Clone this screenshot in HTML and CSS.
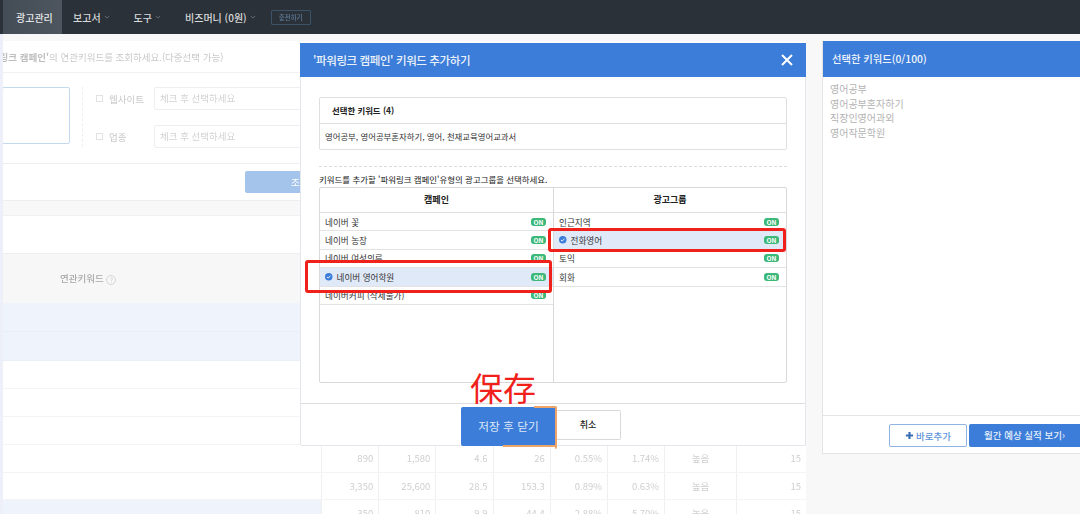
FILE: index.html
```html
<!DOCTYPE html>
<html lang="ko">
<head>
  <meta charset="UTF-8" />
  <title>광고관리</title>
  <link rel="stylesheet" href="styles.css">
</head>
<body>
  <nav class="topbar">
    <a class="nav-item active">광고관리</a>
    <a class="nav-item">보고서 <svg class="chev" viewBox="0 0 8 5"><path d="M1 1l3 3 3-3"/></svg></a>
    <a class="nav-item">도구 <svg class="chev" viewBox="0 0 8 5"><path d="M1 1l3 3 3-3"/></svg></a>
    <a class="nav-item">비즈머니 (0원) <svg class="chev" viewBox="0 0 8 5"><path d="M1 1l3 3 3-3"/></svg></a>
    <span class="charge">충전하기</span>
  </nav>

  <div class="page">
    <main class="main">
      <div class="guide"><span class="guide-text"><b>'파워링크 캠페인'</b>의 연관키워드를 조회하세요.(다중선택 가능)</span></div>
      <div class="filter">
        <div class="keyword-box"></div>
        <div class="filter-fields">
          <div class="field"><i class="check"></i><label>웹사이트</label><span class="select">체크 후 선택하세요</span></div>
          <div class="field"><i class="check"></i><label>업종</label><span class="select">체크 후 선택하세요</span></div>
        </div>
      </div>
      <div class="search-row"><span class="search-btn">조회</span></div>
      <div class="grey-strip"></div>
      <div class="blank-row"></div>
      <div class="thead">연관키워드 <span class="help">?</span></div>
      <div class="row blue tall"></div>
      <div class="row blue tall"></div>
      <div class="row"></div>
      <div class="row"></div>
      <div class="row"></div>
      <div class="row data">
        <span class="c1"></span><span class="c">890</span><span class="c">1,580</span><span class="c">4.6</span><span class="c">26</span><span class="c">0.55%</span><span class="c">1.74%</span><span class="c mid">높음</span><span class="c last">15</span>
      </div>
      <div class="row data">
        <span class="c1"></span><span class="c">3,350</span><span class="c">25,600</span><span class="c">28.5</span><span class="c">153.3</span><span class="c">0.89%</span><span class="c">0.63%</span><span class="c mid">높음</span><span class="c last">15</span>
      </div>
      <div class="row data selected">
        <span class="c1"></span><span class="c">350</span><span class="c">810</span><span class="c">9.9</span><span class="c">44.4</span><span class="c">2.88%</span><span class="c">5.70%</span><span class="c mid">높음</span><span class="c last">15</span>
      </div>
    </main>

    <aside class="side">
      <div class="side-head">선택한 키워드(0/100)</div>
      <ul class="side-list">
        <li>영어공부</li>
        <li>영어공부혼자하기</li>
        <li>직장인영어과외</li>
        <li>영어작문학원</li>
      </ul>
      <div class="side-foot">
        <span class="btn-add"><svg viewBox="0 0 10 10"><path d="M5 1v8M1 5h8"/></svg>바로추가</span>
        <span class="btn-month">월간 예상 실적 보기›</span>
      </div>
    </aside>
  </div>

  <section class="modal">
    <header class="modal-head">
      <span>'파워링크 캠페인' 키워드 추가하기</span>
      <svg class="close" viewBox="0 0 12 12"><path d="M1 1l10 10M11 1L1 11"/></svg>
    </header>
    <div class="modal-body">
      <div class="picked">
        <div class="picked-title">선택한 키워드 (4)</div>
        <div class="picked-list">영어공부, 영어공부혼자하기, 영어, 천재교육영어교과서</div>
      </div>
      <div class="dash"></div>
      <p class="hint">키워드를 추가할 '파워링크 캠페인'유형의 광고그룹을 선택하세요.</p>
      <div class="pick-table">
        <div class="col">
          <div class="col-head">캠페인</div>
          <div class="item"><span>네이버 꽃</span><em>ON</em></div>
          <div class="item"><span>네이버 농장</span><em>ON</em></div>
          <div class="item"><span>네이버 여성의류</span><em>ON</em></div>
          <div class="item on"><svg class="tick" viewBox="0 0 10 10"><circle cx="5" cy="5" r="5"/><path d="M2.6 5.2l1.7 1.6 3-3.2"/></svg><span>네이버 영어학원</span><em>ON</em></div>
          <div class="item"><span>네이버커피 (삭제불가)</span><em>ON</em></div>
        </div>
        <div class="col">
          <div class="col-head">광고그룹</div>
          <div class="item"><span>인근지역</span><em>ON</em></div>
          <div class="item on"><svg class="tick" viewBox="0 0 10 10"><circle cx="5" cy="5" r="5"/><path d="M2.6 5.2l1.7 1.6 3-3.2"/></svg><span>전화영어</span><em>ON</em></div>
          <div class="item"><span>토익</span><em>ON</em></div>
          <div class="item"><span>회화</span><em>ON</em></div>
        </div>
      </div>
    </div>
    <footer class="modal-foot">
      <span class="btn-save">저장 후 닫기</span>
      <span class="btn-cancel">취소</span>
    </footer>
  </section>

  <!-- red marks drawn over the screenshot -->
  <div class="mark mark-left"></div>
  <div class="mark mark-right"></div>
  <div class="mark-text">保存</div>
</body>
</html>
```

FILE: styles.css
```css
* {
  margin: 0;
  padding: 0;
  box-sizing: border-box;
}

body {
  width: 1080px;
  height: 514px;
  overflow: hidden;
  position: relative;
  font-family: "Noto Sans CJK KR", "Noto Sans", sans-serif;
  background: #f8f8f8;
  color: #333;
  filter: blur(0.4px);
}

/* Top bar */
.topbar {
  height: 34px;
  background: #2b3138;
  display: flex;
  align-items: center;
  padding-left: 3px;
  color: #d8dadc;
  font-size: 10px;
  font-weight: 500;
}

.nav-item {
  height: 34px;
  display: flex;
  align-items: center;
  gap: 3px;
  padding: 0 13px 0 11px;
  white-space: nowrap;
}

.nav-item.active {
  width: 59px;
  padding: 0 13px;
  background: linear-gradient(to right, #444c55, #4d555e);
  color: #e4e5e7;
}

.chev {
  width: 6px;
  height: 4px;
  fill: none;
  stroke: #7b828a;
  stroke-width: 1;
}

.charge {
  width: 40px;
  height: 15px;
  margin-left: 2px;
  border: 1px solid #3c5269;
  border-radius: 1px;
  color: #5f7c99;
  font-size: 6.5px;
  line-height: 13px;
  text-align: center;
}

/* Page behind the modal */
.page {
  display: flex;
  align-items: flex-start;
  height: 480px;
  padding-left: 3px;
  background: linear-gradient(to right, #eef0f9 3px, transparent 3px);
}

.main {
  width: 803px;
  height: 480px;
  margin-top: 7px;
  overflow: hidden;
  background: #fff;
  color: #c9c9c9;
}

.guide {
  height: 32px;
  border-bottom: 1px solid #f1f1f1;
  font-size: 9.5px;
  line-height: 33px;
  overflow: hidden;
  white-space: nowrap;
}

.guide-text { margin-left: -24px; }
.guide b { color: #bdbdbd; }

.filter {
  height: 91px;
  display: flex;
  border-bottom: 1px solid #eee;
}

.keyword-box {
  width: 68px;
  height: 57px;
  margin: 14px 0 0 -1px;
  border: 1px solid #c4d8ee;
  border-radius: 2px;
}

.filter-fields {
  height: 60px;
  margin: 14px 0 0 12px;
  padding-left: 13px;
  border-left: 1px dashed #eee;
}

.field {
  height: 23px;
  margin-bottom: 15px;
  display: flex;
  align-items: center;
  font-size: 9.5px;
}

.check {
  width: 7px;
  height: 7px;
  margin-right: 6px;
  border: 1px solid #e2e2e2;
}

.field label { width: 45px; }

.select {
  width: 160px;
  height: 23px;
  padding-left: 5px;
  border: 1px solid #eee;
  border-radius: 2px;
  line-height: 21px;
  color: #d2d2d2;
}

.search-row { height: 36px; padding: 7px 0 0 242px; }

.search-btn {
  display: block;
  width: 120px;
  height: 22px;
  padding-left: 46px;
  border-radius: 2px;
  background: #a5c4ec;
  color: #fff;
  font-size: 9.5px;
  line-height: 22px;
}

.grey-strip {
  height: 16px;
  background: #f8f8f8;
  border-top: 1px solid #eee;
  border-bottom: 1px solid #f1f1f1;
}

.blank-row { height: 37px; }

.thead {
  height: 50px;
  padding-left: 57px;
  background: #f7f7f7;
  border-top: 1px solid #eee;
  color: #a9a9a9;
  font-size: 9.5px;
  font-weight: 500;
  line-height: 49px;
}

.help {
  display: inline-block;
  width: 10px;
  height: 10px;
  border: 1px solid #d6d6d6;
  border-radius: 50%;
  color: #cfcfcf;
  font-size: 7px;
  font-weight: 400;
  line-height: 8px;
  text-align: center;
  vertical-align: -1px;
}

.row {
  height: 28px;
  display: flex;
  border-bottom: 1px solid #f4f4f4;
}

.row.tall { height: 29px; }
.row.blue { background: #eff4fc; border-bottom-color: #e9eff8; }

.row.data { height: 27.5px; }
.row.data.selected .c1 { background: #eff4fc; }

.c1 { width: 318px; }

.c {
  width: 57.2px;
  padding-right: 5px;
  border-left: 1px solid #f0f0f0;
  color: #cfcfcf;
  font-size: 9.5px;
  line-height: 27px;
  text-align: right;
}

.c.mid { width: 72px; padding: 0; text-align: center; }
.c.last { flex: 1; }

/* Right panel */
.side {
  width: 258px;
  height: 413px;
  margin: 7px 0 0 16px;
  display: flex;
  flex-direction: column;
  background: #fff;
  border-left: 1px solid #e4e4e4;
  border-bottom: 1px solid #e4e4e4;
}

.side-head {
  height: 36px;
  padding-left: 9px;
  background: #3b7dd8;
  color: #f2f6fc;
  font-size: 10.3px;
  font-weight: 500;
  line-height: 36px;
}

.side-list {
  flex: 1;
  padding: 5px 7px;
  list-style: none;
  color: #b3b3b3;
  font-size: 10px;
  line-height: 14.5px;
}

.side-foot {
  height: 38px;
  padding: 8px 0 0 66px;
  display: flex;
  gap: 2px;
  border-top: 1px solid #e4e4e4;
  font-size: 9.5px;
  font-weight: 500;
}

.btn-add {
  width: 78px;
  height: 23px;
  display: flex;
  align-items: center;
  justify-content: center;
  gap: 2px;
  background: #fff;
  border: 1px solid #8fb4e4;
  border-radius: 2px;
  color: #5f93d8;
}

.btn-add svg {
  width: 9px;
  height: 9px;
  fill: none;
  stroke: #3b6fb5;
  stroke-width: 2.4;
}

.btn-month {
  flex: 1;
  height: 23px;
  padding-left: 15px;
  background: #3b7dd8;
  border-radius: 2px 0 0 2px;
  color: #e8f0fb;
  line-height: 22px;
  white-space: nowrap;
}

/* Modal */
.modal {
  position: absolute;
  left: 300px;
  top: 43px;
  width: 506px;
  height: 403px;
  display: flex;
  flex-direction: column;
  background: #fff;
  border: 1px solid #e3e6ea;
  border-top: 0;
  border-radius: 0 0 2px 2px;
}

.modal-head {
  height: 34px;
  flex: none;
  margin: 0 -1px;
  display: flex;
  align-items: center;
  justify-content: space-between;
  padding: 0 13px;
  background: #3b7dd8;
  color: #eaf1fb;
  font-size: 11.5px;
  font-weight: 500;
  letter-spacing: -0.4px;
}

.close {
  width: 12px;
  height: 12px;
  fill: none;
  stroke: #fff;
  stroke-width: 2;
}

.modal-body {
  flex: 1;
  padding: 20px 18px 0;
}

.picked {
  height: 53px;
  border: 1px solid #dfdfdf;
  border-radius: 2px;
  font-size: 8.4px;
  color: #222;
}

.picked-title {
  height: 26px;
  padding-left: 12px;
  border-bottom: 1px solid #dfdfdf;
  font-weight: 700;
  line-height: 25px;
}

.picked-list {
  padding-left: 5px;
  line-height: 25px;
  color: #333;
}

.dash {
  height: 0;
  margin-top: 16px;
  border-top: 1px dashed #dcdcdc;
}

.hint {
  margin-top: 6px;
  height: 14px;
  font-size: 8.45px;
  line-height: 13px;
  color: #222;
}

.pick-table {
  height: 196px;
  display: flex;
  border: 1px solid #d9d9d9;
  border-radius: 2px;
}

.col { flex: 1; }
.col:first-child { flex: none; width: 233px; }
.col + .col { border-left: 1px solid #d9d9d9; }

.col-head {
  height: 25px;
  border-bottom: 1px solid #dfdfdf;
  color: #222;
  font-size: 9px;
  font-weight: 700;
  line-height: 24px;
  text-align: center;
}

.item {
  height: 18.4px;
  padding: 0 7px 0 5px;
  display: flex;
  align-items: center;
  border-bottom: 1px solid #e3e3e3;
  color: #333;
  font-size: 8.6px;
}

.item span { flex: 1; }

.item em {
  width: 15px;
  height: 8px;
  border-radius: 3px;
  background: #3cb878;
  color: #fff;
  font-size: 6.5px;
  font-style: normal;
  font-weight: 700;
  line-height: 8px;
  text-align: center;
}

.item.on { background: #dfe9f8; }

.tick {
  width: 7.5px;
  height: 7.5px;
  margin-right: 4px;
  fill: #3b7dd8;
  stroke: none;
}

.tick path {
  fill: none;
  stroke: #fff;
  stroke-width: 1.2;
}

.modal-foot {
  height: 42px;
  flex: none;
  display: flex;
  align-items: center;
  padding-left: 160px;
  border-top: 1px solid #dedede;
  font-size: 10.5px;
}

.btn-save {
  position: relative;
  width: 95px;
  height: 39px;
  margin-top: 3px;
  background: #3b7dd8;
  border-radius: 2px;
  color: #dfe9f8;
  font-size: 11.7px;
  line-height: 38px;
  text-align: center;
}

/* orange trace round the pressed button */
.btn-save::before {
  content: "";
  position: absolute;
  top: -1px;
  right: -1px;
  width: 21px;
  height: 41px;
  border-top: 2px solid #eda468;
  border-right: 2px solid #eda468;
  border-radius: 0 2px 2px 0;
}

.btn-save::after {
  content: "";
  position: absolute;
  left: 42px;
  right: -1px;
  bottom: -1px;
  height: 2px;
  background: #eda468;
}

.btn-cancel {
  width: 65px;
  height: 30px;
  margin-top: 1px;
  background: #fff;
  border: 1px solid #d9d9d9;
  border-left: 0;
  border-radius: 0 2px 2px 0;
  color: #222;
  font-size: 9px;
  font-weight: 500;
  line-height: 28px;
  text-align: center;
}

/* Annotations */
.mark {
  position: absolute;
  border: 3px solid #f0201a;
  border-radius: 3px;
}

.mark-left { left: 305px; top: 260px; width: 247px; height: 33px; }
.mark-right { left: 548px; top: 228px; width: 238px; height: 24px; }

.mark-text {
  position: absolute;
  left: 470px;
  top: 365px;
  color: #f0201a;
  font-family: "Noto Sans CJK SC", sans-serif;
  font-size: 33px;
  font-weight: 400;
  line-height: 44px;
}
```
